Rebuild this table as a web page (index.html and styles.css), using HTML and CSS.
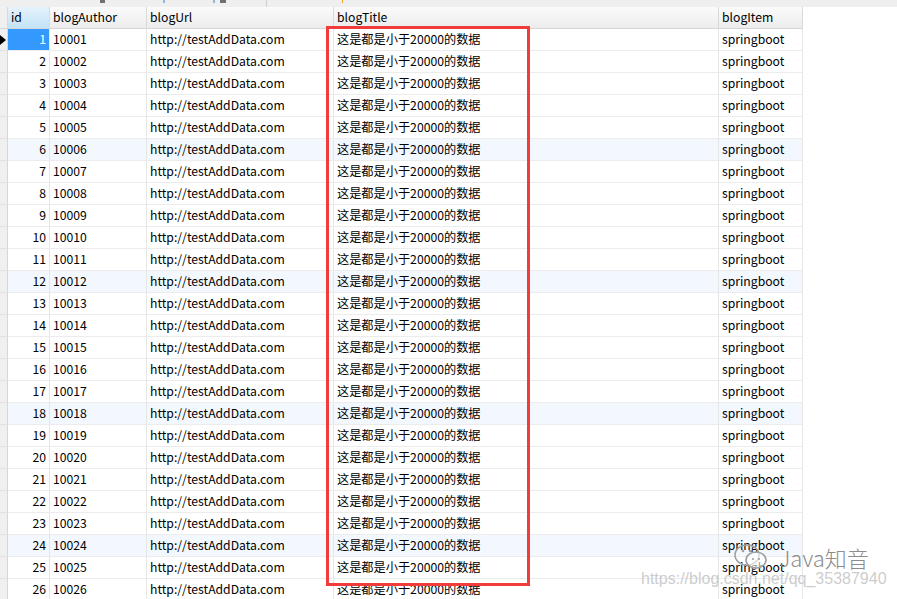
FILE: index.html
```html
<!DOCTYPE html>
<html>
<head>
<meta charset="utf-8">
<link rel="stylesheet" href="styles.css">
</head>
<body>
<div class="toolbar">
  <span class="tb tb-a"></span><span class="tb tb-b"></span><span class="tb tb-c"></span><span class="tb tb-d"></span><span class="tb tb-sep"></span><span class="tb tb-e"></span>
</div>
<div class="grid">
  <div class="row head">
    <div class="c ind"></div><div class="c id sel">id</div><div class="c">blogAuthor</div><div class="c">blogUrl</div><div class="c">blogTitle</div><div class="c">blogItem</div>
  </div>
  <div class="row"><div class="c ind cur"><span class="arrow"></span></div><div class="c num active">1</div><div class="c">10001</div><div class="c">http://testAddData.com</div><div class="c">这是都是小于20000的数据</div><div class="c">springboot</div></div>
  <div class="row"><div class="c ind"></div><div class="c num">2</div><div class="c">10002</div><div class="c">http://testAddData.com</div><div class="c">这是都是小于20000的数据</div><div class="c">springboot</div></div>
  <div class="row"><div class="c ind"></div><div class="c num">3</div><div class="c">10003</div><div class="c">http://testAddData.com</div><div class="c">这是都是小于20000的数据</div><div class="c">springboot</div></div>
  <div class="row"><div class="c ind"></div><div class="c num">4</div><div class="c">10004</div><div class="c">http://testAddData.com</div><div class="c">这是都是小于20000的数据</div><div class="c">springboot</div></div>
  <div class="row"><div class="c ind"></div><div class="c num">5</div><div class="c">10005</div><div class="c">http://testAddData.com</div><div class="c">这是都是小于20000的数据</div><div class="c">springboot</div></div>
  <div class="row alt"><div class="c ind"></div><div class="c num">6</div><div class="c">10006</div><div class="c">http://testAddData.com</div><div class="c">这是都是小于20000的数据</div><div class="c">springboot</div></div>
  <div class="row"><div class="c ind"></div><div class="c num">7</div><div class="c">10007</div><div class="c">http://testAddData.com</div><div class="c">这是都是小于20000的数据</div><div class="c">springboot</div></div>
  <div class="row"><div class="c ind"></div><div class="c num">8</div><div class="c">10008</div><div class="c">http://testAddData.com</div><div class="c">这是都是小于20000的数据</div><div class="c">springboot</div></div>
  <div class="row"><div class="c ind"></div><div class="c num">9</div><div class="c">10009</div><div class="c">http://testAddData.com</div><div class="c">这是都是小于20000的数据</div><div class="c">springboot</div></div>
  <div class="row"><div class="c ind"></div><div class="c num">10</div><div class="c">10010</div><div class="c">http://testAddData.com</div><div class="c">这是都是小于20000的数据</div><div class="c">springboot</div></div>
  <div class="row"><div class="c ind"></div><div class="c num">11</div><div class="c">10011</div><div class="c">http://testAddData.com</div><div class="c">这是都是小于20000的数据</div><div class="c">springboot</div></div>
  <div class="row alt"><div class="c ind"></div><div class="c num">12</div><div class="c">10012</div><div class="c">http://testAddData.com</div><div class="c">这是都是小于20000的数据</div><div class="c">springboot</div></div>
  <div class="row"><div class="c ind"></div><div class="c num">13</div><div class="c">10013</div><div class="c">http://testAddData.com</div><div class="c">这是都是小于20000的数据</div><div class="c">springboot</div></div>
  <div class="row"><div class="c ind"></div><div class="c num">14</div><div class="c">10014</div><div class="c">http://testAddData.com</div><div class="c">这是都是小于20000的数据</div><div class="c">springboot</div></div>
  <div class="row"><div class="c ind"></div><div class="c num">15</div><div class="c">10015</div><div class="c">http://testAddData.com</div><div class="c">这是都是小于20000的数据</div><div class="c">springboot</div></div>
  <div class="row"><div class="c ind"></div><div class="c num">16</div><div class="c">10016</div><div class="c">http://testAddData.com</div><div class="c">这是都是小于20000的数据</div><div class="c">springboot</div></div>
  <div class="row"><div class="c ind"></div><div class="c num">17</div><div class="c">10017</div><div class="c">http://testAddData.com</div><div class="c">这是都是小于20000的数据</div><div class="c">springboot</div></div>
  <div class="row alt"><div class="c ind"></div><div class="c num">18</div><div class="c">10018</div><div class="c">http://testAddData.com</div><div class="c">这是都是小于20000的数据</div><div class="c">springboot</div></div>
  <div class="row"><div class="c ind"></div><div class="c num">19</div><div class="c">10019</div><div class="c">http://testAddData.com</div><div class="c">这是都是小于20000的数据</div><div class="c">springboot</div></div>
  <div class="row"><div class="c ind"></div><div class="c num">20</div><div class="c">10020</div><div class="c">http://testAddData.com</div><div class="c">这是都是小于20000的数据</div><div class="c">springboot</div></div>
  <div class="row"><div class="c ind"></div><div class="c num">21</div><div class="c">10021</div><div class="c">http://testAddData.com</div><div class="c">这是都是小于20000的数据</div><div class="c">springboot</div></div>
  <div class="row"><div class="c ind"></div><div class="c num">22</div><div class="c">10022</div><div class="c">http://testAddData.com</div><div class="c">这是都是小于20000的数据</div><div class="c">springboot</div></div>
  <div class="row"><div class="c ind"></div><div class="c num">23</div><div class="c">10023</div><div class="c">http://testAddData.com</div><div class="c">这是都是小于20000的数据</div><div class="c">springboot</div></div>
  <div class="row alt"><div class="c ind"></div><div class="c num">24</div><div class="c">10024</div><div class="c">http://testAddData.com</div><div class="c">这是都是小于20000的数据</div><div class="c">springboot</div></div>
  <div class="row"><div class="c ind"></div><div class="c num">25</div><div class="c">10025</div><div class="c">http://testAddData.com</div><div class="c">这是都是小于20000的数据</div><div class="c">springboot</div></div>
  <div class="row"><div class="c ind"></div><div class="c num">26</div><div class="c">10026</div><div class="c">http://testAddData.com</div><div class="c">这是都是小于20000的数据</div><div class="c">springboot</div></div>
</div>
<div class="redbox"></div>
<div class="wm">
  <svg class="wx" width="36" height="28" viewBox="0 0 36 28">
    <ellipse cx="14" cy="12" rx="12" ry="10" fill="none" stroke="#a0a0a0" stroke-width="1.6"/>
    <ellipse cx="23" cy="17" rx="10" ry="8" fill="#fff" fill-opacity="0.6" stroke="#a0a0a0" stroke-width="1.6"/>
    <circle cx="10" cy="8" r="1.3" fill="#a0a0a0"/><circle cx="17" cy="8" r="1.3" fill="#a0a0a0"/>
    <circle cx="20" cy="16" r="1.1" fill="#a0a0a0"/><circle cx="26" cy="16" r="1.1" fill="#a0a0a0"/>
  </svg>
  <span class="wm-name">Java知音</span>
</div>
<div class="wm-url">https://blog.csdn.net/qq_35387940</div>
</body>
</html>
```
FILE: styles.css
```css
html, body { margin: 0; padding: 0; background: #fff; }
body {
  width: 897px; height: 599px; overflow: hidden; position: relative;
  font-family: "Noto Sans CJK SC", "Noto Sans", sans-serif;
  font-size: 12.2px; color: #000;
}
.toolbar {
  height: 7px; background: #efefef; position: relative;
}
.tb { position: absolute; top: 0; height: 3px; }
.tb-a { left: 100px; width: 5px; background: #707070; }
.tb-b { left: 163px; width: 2px; background: #8fb7e3; }
.tb-c { left: 213px; width: 2px; background: #8fb7e3; }
.tb-d { left: 220px; width: 6px; background: #707070; }
.tb-sep { left: 266px; width: 1px; height: 7px; background: #d0d0d0; }
.tb-e { left: 342px; width: 1px; background: #f0a030; }

.grid { display: flex; flex-direction: column; width: 803px; }
.row {
  display: grid;
  grid-template-columns: 8px 42px 97px 187px 385px 84px;
  height: 22px;
}
.c {
  box-sizing: border-box; height: 22px;
  border-right: 1px solid #e6e6e6; border-bottom: 1px solid #ececec;
  padding-left: 3px; line-height: 21px; white-space: nowrap; overflow: hidden;
}
.head .c {
  background: linear-gradient(#fbfbfb, #ececec);
  border-right: 1px solid #d9d9d9; border-bottom: 1px solid #d6d6d6;
}
.head .c.sel { background: linear-gradient(#e6f3fc, #c2e3f7); }
.ind { padding: 0; background: #f0f0f0; border-right: 1px solid #d6d6d6; border-bottom: 1px solid #e2e2e2; position: relative; }
.head .ind { background: #f0f0f0; }
.num { text-align: right; padding: 0 3px 0 0; }
.active { background: #3399ff; color: #fff; }
.alt .c:not(.ind) { background: #f3f8fe; }
.arrow {
  position: absolute; left: 0; top: 6px;
  border-top: 5px solid transparent; border-bottom: 5px solid transparent;
  border-left: 6px solid #000;
}
.redbox {
  position: absolute; left: 326px; top: 26px; width: 198px; height: 554px;
  border: 3px solid #f23b3b;
}
.wm {
  position: absolute; left: 733px; top: 543px;
  display: flex; align-items: center; gap: 10px;
}
.wm-name {
  font-family: "Noto Sans CJK SC", sans-serif; font-size: 22px; color: #8c8c8c;
  line-height: 26px; font-weight: 300;
}
.wm-url {
  position: absolute; left: 641px; top: 568px;
  font-family: "Liberation Sans", Arial, sans-serif; font-size: 16px;
  color: rgba(195,195,195,0.85); line-height: 22px;
}
```
